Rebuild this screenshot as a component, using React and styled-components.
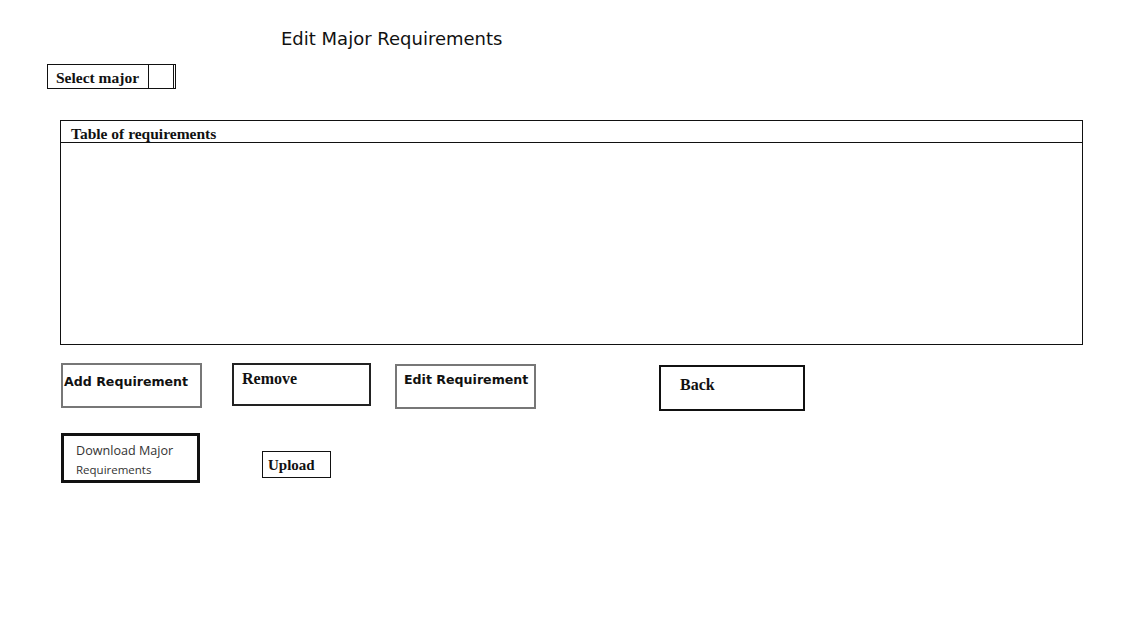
import React from "react";
import styled, { createGlobalStyle } from "styled-components";

const GlobalStyle = createGlobalStyle`
  html, body {
    margin: 0;
    padding: 0;
    background: #fff;
    color: #000;
  }
`;

const serif = `"Liberation Serif", "Times New Roman", serif`;
const sans = `"DejaVu Sans", Verdana, sans-serif`;
const soft = `"Open Sans", "Noto Sans", sans-serif`;

const Page = styled.div`
  width: 1124px;
  height: 625px;
  display: flex;
  flex-direction: column;
  align-items: flex-start;
  padding-top: 28px;
  box-sizing: border-box;
`;

const Title = styled.h1`
  margin: 0 0 0 281px;
  font-family: ${sans};
  font-weight: normal;
  font-size: 18px;
  line-height: 22px;
  color: #111;
`;

const SelectBox = styled.div`
  margin: 14px 0 0 47px;
  display: flex;
  width: 129px;
  height: 25px;
  box-sizing: border-box;
  border: 1px solid #111;
  border-right: none;
`;

const SelectLabel = styled.span`
  flex: 1;
  padding: 5px 0 0 8px;
  font-family: ${serif};
  font-weight: bold;
  font-size: 15.5px;
  line-height: 16px;
  color: #111;
`;

const SelectToggle = styled.span`
  width: 28px;
  margin-top: -1px;
  box-sizing: border-box;
  border-left: 1px solid #111;
  border-right: 3px double #111;
  border-top: 1px solid #111;
`;

const Table = styled.div`
  margin: 31px 0 0 60px;
  width: 1023px;
  height: 225px;
  box-sizing: border-box;
  border: 1px solid #111;
  display: flex;
  flex-direction: column;
`;

const TableHead = styled.div`
  height: 22px;
  box-sizing: border-box;
  border-bottom: 1px solid #111;
  padding: 4px 0 0 10px;
  font-family: ${serif};
  font-weight: bold;
  font-size: 15.5px;
  line-height: 17px;
  color: #111;
`;

const ButtonRow = styled.div`
  display: flex;
  align-items: flex-start;
  margin-top: ${(p) => p.$top}px;
`;

const Button = styled.div`
  box-sizing: border-box;
  width: ${(p) => p.$w}px;
  height: ${(p) => p.$h}px;
  margin-left: ${(p) => p.$left}px;
  margin-top: ${(p) => p.$top || 0}px;
  border: ${(p) => p.$border};
  padding: ${(p) => p.$pad};
  font-family: ${(p) => (p.$kind === "serif" ? serif : p.$kind === "soft" ? soft : sans)};
  font-weight: ${(p) => (p.$kind === "soft" ? "normal" : "bold")};
  font-size: ${(p) => p.$size}px;
  line-height: ${(p) => Math.round(p.$size) + 3}px;
  color: ${(p) => (p.$kind === "soft" ? "#333" : "#111")};
  background: #fff;
  white-space: nowrap;
`;

const Small = styled.span`
  display: block;
  margin-top: 2px;
  font-size: 11.5px;
  line-height: 18px;
`;

export default function App() {
  return (
    <>
      <GlobalStyle />
      <Page>
        <Title>Edit Major Requirements</Title>
        <SelectBox>
          <SelectLabel>Select major</SelectLabel>
          <SelectToggle />
        </SelectBox>
        <Table>
          <TableHead>Table of requirements</TableHead>
        </Table>
        <ButtonRow $top={18}>
          <Button $left={61} $w={141} $h={45} $border="2px solid #777" $pad="9px 0 0 1px" $kind="sans" $size={12.6}>
            Add Requirement
          </Button>
          <Button $left={30} $w={139} $h={43} $border="2px solid #222" $pad="4px 0 0 8px" $kind="serif" $size={16}>
            Remove
          </Button>
          <Button $left={24} $top={1} $w={141} $h={45} $border="2px solid #777" $pad="6px 0 0 7px" $kind="sans" $size={12.6}>
            Edit Requirement
          </Button>
          <Button $left={123} $top={2} $w={146} $h={46} $border="2px solid #111" $pad="8px 0 0 19px" $kind="serif" $size={16}>
            Back
          </Button>
        </ButtonRow>
        <ButtonRow $top={22}>
          <Button $left={61} $w={139} $h={50} $border="3px solid #111" $pad="7px 0 0 12px" $kind="soft" $size={12.6}>
            Download Major
            <Small>Requirements</Small>
          </Button>
          <Button $left={62} $top={18} $w={69} $h={27} $border="1px solid #111" $pad="4px 0 0 5px" $kind="serif" $size={15}>
            Upload
          </Button>
        </ButtonRow>
      </Page>
    </>
  );
}
